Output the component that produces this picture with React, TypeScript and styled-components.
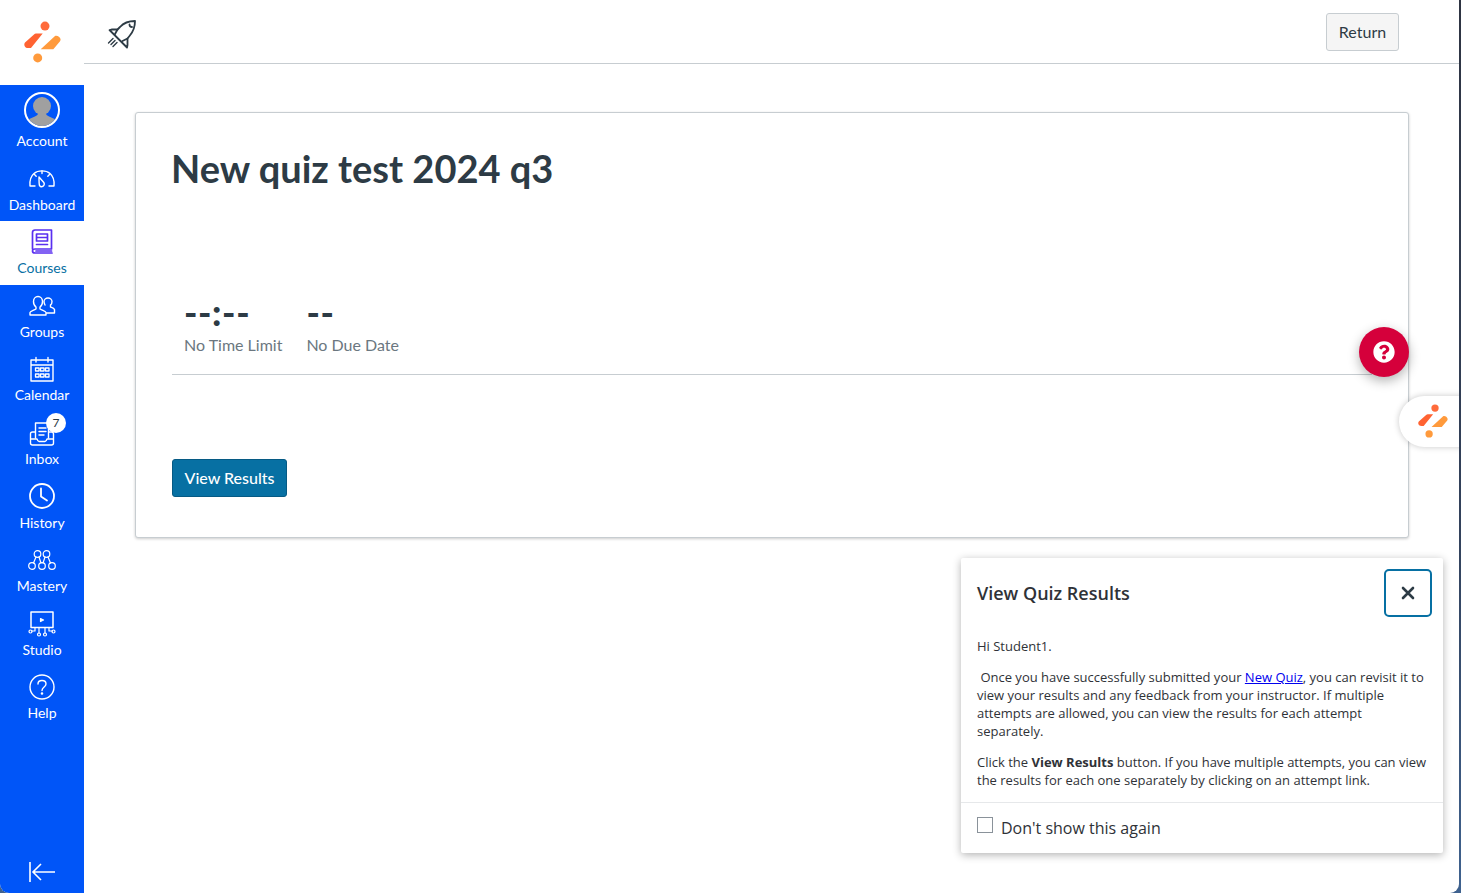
import React from 'react'
import styled, { createGlobalStyle } from 'styled-components'
import { FaQuestionCircle } from 'react-icons/fa'

const GlobalStyle = createGlobalStyle`
	html,
	body {
		margin: 0;
		padding: 0;
		height: 100%;
		overflow: hidden;
		font-family: Lato, 'Liberation Sans', sans-serif;
		background: linear-gradient(180deg, #2e3442 0%, #33425c 60%, #3f628f 100%);
	}

	* {
		box-sizing: border-box;
	}
`

const Frame = styled.div`
	position: relative;
	display: flex;
	width: 1459px;
	height: 893px;
	background: #fff;
	border-radius: 0 0 9px 9px;
	overflow: hidden;
`

const Sidebar = styled.nav`
	display: flex;
	flex-direction: column;
	flex: 0 0 84px;
	height: 100%;
	background: #0055f8;
`

const LogoBox = styled.div`
	display: flex;
	align-items: center;
	justify-content: center;
	height: 85px;
	background: #fff;
`

const NavItem = styled.a<{ $active?: boolean; $tall?: boolean }>`
	display: flex;
	flex-direction: column;
	align-items: center;
	flex: 0 0 ${p => (p.$tall ? '72.4px' : '63.6px')};
	padding-top: 7px;
	font-size: 14px;
	line-height: 20px;
	color: ${p => (p.$active ? '#0770a3' : '#fff')};
	background: ${p => (p.$active ? '#fff' : 'transparent')};
`

const IconSlot = styled.span<{ $tall?: boolean }>`
	position: relative;
	display: flex;
	align-items: center;
	justify-content: center;
	height: ${p => (p.$tall ? '36px' : '28px')};
	margin-bottom: ${p => (p.$tall ? '3px' : '2.2px')};
`

const Avatar = styled.span`
	display: block;
	width: 36px;
	height: 36px;
	border: 2px solid #fff;
	border-radius: 50%;
	overflow: hidden;
	background: #fff;
`

const Badge = styled.span`
	position: absolute;
	top: -6px;
	left: 18px;
	width: 20px;
	height: 20px;
	border-radius: 50%;
	background: #fff;
	color: #2d3b45;
	font-size: 12px;
	line-height: 20px;
	text-align: center;
`

const Collapse = styled.a`
	display: flex;
	justify-content: center;
	margin-top: auto;
	padding-bottom: 9px;
`

const Main = styled.div`
	display: flex;
	flex-direction: column;
	flex: 1;
	min-width: 0;
`

const TopBar = styled.header`
	display: flex;
	align-items: center;
	justify-content: space-between;
	flex: 0 0 64px;
	padding: 1px 60px 0 23px;
	border-bottom: 1px solid #c7cdd1;
`

const RocketSvg = styled.svg`
	margin-top: 4px;
`

const ReturnButton = styled.button`
	width: 73px;
	height: 38px;
	padding: 0;
	background: #f5f5f5;
	border: 1px solid #c7cdd1;
	border-radius: 3px;
	color: #2d3b45;
	font: 400 16px/20px Lato, sans-serif;
`

const Content = styled.main`
	padding: 48px 50px 0 51px;
`

const Card = styled.section`
	height: 426px;
	padding: 0 36px;
	background: #fff;
	border: 1px solid #c7cdd1;
	border-radius: 3px;
	box-shadow: 0 1px 3px rgba(0, 0, 0, 0.2);
`

const Title = styled.h1`
	margin: 32px 0 0 -1px;
	font-size: 38px;
	line-height: 46px;
	font-weight: 700;
	color: #2d3b45;
`

const Stats = styled.div`
	display: flex;
	gap: 24px;
	margin-top: 101px;
	padding: 0 12px 18px;
	border-bottom: 1px solid #c7cdd1;
`

const Stat = styled.div`
	display: flex;
	flex-direction: column;
	align-items: flex-start;
`

const StatValue = styled.div`
	font-size: 36px;
	line-height: 40px;
	font-weight: 900;
	color: #2d3b45;
	letter-spacing: 0.6px;
`

const StatLabel = styled.div`
	margin-top: 2px;
	font-size: 16px;
	line-height: 22px;
	color: #6b7780;
`

const ViewButton = styled.button`
	display: block;
	width: 115px;
	height: 38px;
	margin-top: 84px;
	padding: 0;
	background: #0770a3;
	border: 1px solid #065a84;
	border-radius: 3px;
	color: #fff;
	font: 500 16px/20px Lato, sans-serif;
`

const HelpFab = styled.button`
	position: absolute;
	top: 327px;
	left: 1359px;
	display: flex;
	align-items: center;
	justify-content: center;
	width: 50px;
	height: 50px;
	padding: 0;
	border: 0;
	border-radius: 50%;
	background: #d5003b;
	color: #fff;
	box-shadow: 0 4px 12px rgba(0, 0, 0, 0.3);
`

const GuideTab = styled.div`
	position: absolute;
	top: 396px;
	right: -30px;
	display: flex;
	align-items: center;
	width: 90px;
	height: 51px;
	padding-left: 19px;
	background: #fff;
	border-radius: 26px;
	box-shadow: 0 0 6px rgba(0, 0, 0, 0.22);
`

const Popover = styled.aside`
	position: absolute;
	top: 558px;
	left: 961px;
	width: 482px;
	height: 295px;
	display: flex;
	flex-direction: column;
	background: #fff;
	border-radius: 2px;
	box-shadow: 0 2px 8px rgba(0, 0, 0, 0.3);
	font-family: 'Open Sans', sans-serif;
	color: #2f3237;
`

const PopoverHead = styled.div`
	display: flex;
	align-items: center;
	justify-content: space-between;
	padding: 11px 11px 0 16px;
`

const PopoverTitle = styled.h2`
	margin: 0;
	font-size: 18px;
	line-height: 24px;
	font-weight: 600;
`

const CloseButton = styled.button`
	display: flex;
	align-items: center;
	justify-content: center;
	width: 48px;
	height: 48px;
	padding: 0;
	background: #fff;
	border: 2px solid #0770a3;
	border-radius: 5px;
`

const PopoverBody = styled.div`
	flex: 1;
	padding: 20px 16px 0;
	font-size: 13px;
	line-height: 18px;
`

const Para = styled.p`
	margin: 0 0 13px;
`

const InlineLink = styled.a`
	color: #0000ee;
	text-decoration: underline;
`

const PopoverFoot = styled.label`
	display: flex;
	align-items: flex-start;
	gap: 8px;
	height: 51px;
	padding: 14px 16px 0;
	border-top: 1px solid #e6e8ea;
	font-size: 16px;
	line-height: 22px;
`

const CheckBox = styled.span`
	flex: 0 0 16px;
	height: 16px;
	border: 1px solid #8a929a;
	background: #fff;
`

const Logo = ({ size }: { size: number }) => (
	<svg width={size} height={size * 1.14} viewBox='0 0 37 41'>
		<circle cx='21' cy='4.500' r='4.500' fill='#ff6b3b' />
		<circle cx='13.700' cy='36.300' r='4.500' fill='#ff9a3c' />
		<path d='M12 12H18.700L7 26.500H4.500C1 26.500-0.800 23.500 1 21L10 13C10.700 12.300 11.200 12 12 12Z' fill='#ff6332' />
		<path d='M31 14.500C33 13.500 36 15.500 36.500 17.500C36.800 18.800 36 20 35 21L29.300 27.700H16.700Z' fill='#ff9a3c' />
	</svg>
)

const Stroke = ({ children, color = '#fff', w = 1.6 }: { children: React.ReactNode; color?: string; w?: number }) => (
	<svg width='28' height='28' viewBox='0 0 28 28' fill='none' stroke={color} strokeWidth={w} strokeLinecap='round' strokeLinejoin='round'>
		{children}
	</svg>
)

const DashboardIcon = () => (
	<Stroke w={1.4}>
		<path d='M7 22H2C1.500 17 2.500 12.500 6 9.500C10 6 18 6 22 9.500C25.500 12.500 26.500 17 26 22H21' />
		<path d='M11 13L15.800 18.500A2.600 2.600 0 0 1 11.500 21.500C11 20 11 16 11 13Z' />
		<path d='M14 7V9.500M6.500 10.500L8.200 12.200M21.500 10.500L19.800 12.200' />
	</Stroke>
)

const CoursesIcon = () => (
	<Stroke color='#5a2ff0' w={1.7}>
		<path d='M4.500 21V4.500C4.500 3 5.500 2 7 2H23.500V21H7C5.500 21 4.500 22 4.500 23C4.500 24.500 5.500 25 7 25H24' />
		<path d='M8.500 6H19.500V13H8.500ZM8.500 9.500H19.500M8.500 16.500H19.500M8 23H23.500' />
	</Stroke>
)

const GroupsIcon = () => (
	<Stroke w={1.4}>
		<path d='M2 23V20.500C2 19 5.500 18.500 8 17V15C6.500 14 5.500 12 5.500 9.500C5.500 6.500 7.500 4.500 10 4.500C12.500 4.500 14.500 6.500 14.500 9.500C14.500 12 13.500 14 12 15V17C14.500 18.500 18 19 18 20.500V23Z' />
		<path d='M17 13C16.500 12 16 10.500 16 9.500C16 7.500 18 6 20 6C22 6 24 7.500 24 9.500C24 10.500 23.500 12.500 22.500 13V15C24 15.500 26 16 26.500 17.500V21H18.500' />
	</Stroke>
)

const CalendarIcon = () => (
	<Stroke w={1.4}>
		<path d='M3 5H25V26H3ZM3 10H25M8 2.500V7M20 2.500V7' />
		<path d='M7.500 13H11V16H7.500ZM12.500 13H16V16H12.500ZM17.500 13H21V16H17.500ZM7.500 19H11V22H7.500ZM12.500 19H16V22H12.500ZM17.500 19H21V22H17.500Z' strokeWidth='1.300' />
	</Stroke>
)

const InboxIcon = () => (
	<Stroke w={1.4}>
		<path d='M7.500 19V4H20.500V19' />
		<path d='M11 9H18M11 12.500H18M11 16H16' />
		<path d='M7 13H4.500C3 13 2.500 14 2.500 15V24C2.500 25 3 26 4.500 26H23.500C25 26 25.500 25 25.500 24V15C25.500 14 25 13 23.500 13H21M2.500 20H9C9.500 21.500 10 22.500 11 22.500H17C18 22.500 18.500 21.500 19 20H25.500' />
	</Stroke>
)

const HistoryIcon = () => (
	<Stroke w={1.8}>
		<circle cx='14' cy='14' r='12' />
		<path d='M13 6.500V14.500L19 18.500' />
	</Stroke>
)

const MasteryIcon = () => (
	<Stroke w={1.2}>
		<circle cx='9.500' cy='8' r='3.300' />
		<circle cx='18.500' cy='8' r='3.300' />
		<circle cx='4' cy='20' r='3.300' />
		<circle cx='14' cy='20' r='3.300' />
		<circle cx='24' cy='20' r='3.300' />
		<path d='M8 11L5.500 17M11 11L13 17M17 11L15 17M20 11L22.500 17' />
	</Stroke>
)

const StudioIcon = () => (
	<Stroke w={1.2}>
		<path d='M3 2H25V17.500H3Z' strokeWidth='1.500' />
		<path d='M12.500 8.500L15.500 10L12.500 11.500Z' fill='#fff' />
		<path d='M7 17.500V21H3.500M11 17.500V23M17 17.500V23M21 17.500V21H24.500' />
		<circle cx='2.500' cy='21.500' r='1.500' />
		<circle cx='11' cy='24.500' r='1.500' />
		<circle cx='17' cy='24.500' r='1.500' />
		<circle cx='25.500' cy='21.500' r='1.500' />
	</Stroke>
)

const HelpIcon = () => (
	<Stroke w={1.4}>
		<circle cx='14' cy='14' r='12' />
		<path d='M10 11C10 8.500 12 7.500 14 7.500C16.500 7.500 18 9 18 11C18 14 14 14 14 17.500' />
		<circle cx='14' cy='20.500' r='0.600' fill='#fff' />
	</Stroke>
)

const RocketIcon = () => (
	<RocketSvg width='30' height='30' viewBox='0 0 30 30' fill='none' stroke='#2d3b45' strokeWidth='1.800' strokeLinejoin='round' strokeLinecap='round'>
		<path d='M28 2C22 2 17 3.500 13 8L10.500 10.500H4.500L2.500 11L20 28.500L20.500 26V19.500L22.500 17C26 13 28 8 28 2Z' />
		<path d='M10.500 10.500L8 15M20.500 19.500L15.500 22' />
		<path d='M22.500 5.500A2.500 2.500 0 0 0 25 8' />
		<path d='M6 19.500L1.500 24M8 21.500L4 25.500M10 23.500L6 27.500' strokeWidth='1.400' />
	</RocketSvg>
)

const items: { label: string; icon: React.ReactNode; active?: boolean; badge?: string }[] = [
	{ label: 'Dashboard', icon: <DashboardIcon /> },
	{ label: 'Courses', icon: <CoursesIcon />, active: true },
	{ label: 'Groups', icon: <GroupsIcon /> },
	{ label: 'Calendar', icon: <CalendarIcon /> },
	{ label: 'Inbox', icon: <InboxIcon />, badge: '7' },
	{ label: 'History', icon: <HistoryIcon /> },
	{ label: 'Mastery', icon: <MasteryIcon /> },
	{ label: 'Studio', icon: <StudioIcon /> },
	{ label: 'Help', icon: <HelpIcon /> }
]

export default function App() {
	return (
		<>
			<GlobalStyle />
			<Frame>
				<Sidebar>
					<LogoBox>
						<Logo size={37} />
					</LogoBox>
					<NavItem $tall>
						<IconSlot $tall>
							<Avatar>
								<svg width='32' height='32' viewBox='0 0 32 32'>
									<rect width='32' height='32' fill='#0055f8' />
									<circle cx='16' cy='12' r='9' fill='#a0a0a0' />
									<path d='M0 32V27C4 23.500 10 23.500 12 20H20C22 23.500 28 23.500 32 27V32Z' fill='#a0a0a0' />
								</svg>
							</Avatar>
						</IconSlot>
						Account
					</NavItem>
					{items.map(item => (
						<NavItem key={item.label} $active={item.active}>
							<IconSlot>
								{item.icon}
								{item.badge && <Badge>{item.badge}</Badge>}
							</IconSlot>
							{item.label}
						</NavItem>
					))}
					<Collapse>
						<svg width='28' height='24' viewBox='0 0 28 24' fill='none' stroke='#fff' strokeWidth='1.600'>
							<path d='M2 2V22M27 12H5M13 4L5 12L13 20' />
						</svg>
					</Collapse>
				</Sidebar>
				<Main>
					<TopBar>
						<RocketIcon />
						<ReturnButton>Return</ReturnButton>
					</TopBar>
					<Content>
						<Card>
							<Title>New quiz test 2024 q3</Title>
							<Stats>
								<Stat>
									<StatValue>--:--</StatValue>
									<StatLabel>No Time Limit</StatLabel>
								</Stat>
								<Stat>
									<StatValue>--</StatValue>
									<StatLabel>No Due Date</StatLabel>
								</Stat>
							</Stats>
							<ViewButton>View Results</ViewButton>
						</Card>
					</Content>
				</Main>
				<HelpFab aria-label='Help'>
					<FaQuestionCircle size={22} />
				</HelpFab>
				<GuideTab>
					<Logo size={30} />
				</GuideTab>
				<Popover>
					<PopoverHead>
						<PopoverTitle>View Quiz Results</PopoverTitle>
						<CloseButton aria-label='Close'>
							<svg width='14' height='14' viewBox='0 0 14 14' stroke='#2d3b45' strokeWidth='2.600' strokeLinecap='round'>
								<path d='M2 2L12 12M12 2L2 12' />
							</svg>
						</CloseButton>
					</PopoverHead>
					<PopoverBody>
						<Para>Hi Student1.</Para>
						<Para>
							&nbsp;Once you have successfully submitted your <InlineLink>New Quiz</InlineLink>, you can revisit it to view your results and any feedback from your instructor. If multiple attempts are allowed, you can view the results for each attempt separately.
						</Para>
						<Para>
							Click the <b>View Results</b> button. If you have multiple attempts, you can view the results for each one separately by clicking on an attempt link.
						</Para>
					</PopoverBody>
					<PopoverFoot>
						<CheckBox />
						Don't show this again
					</PopoverFoot>
				</Popover>
			</Frame>
		</>
	)
}
